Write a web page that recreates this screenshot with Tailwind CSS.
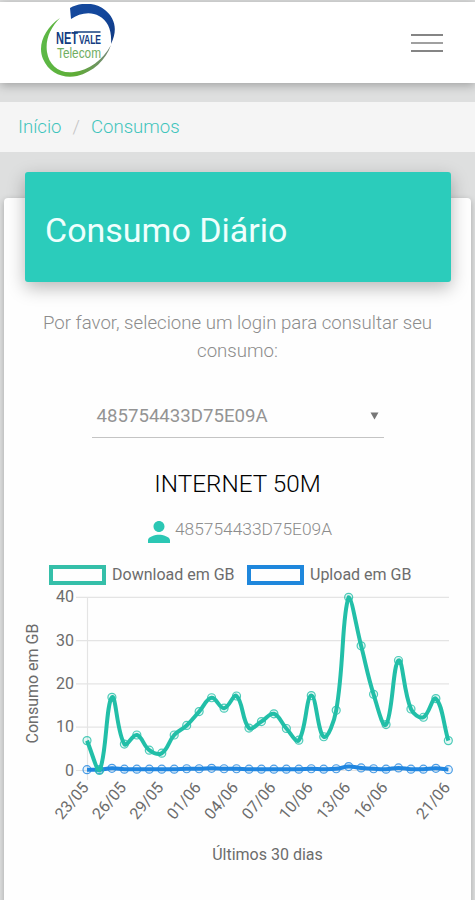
<!DOCTYPE html>
<html lang="pt-BR">

<head>
    <meta charset="utf-8">
    <meta name="viewport" content="width=device-width, initial-scale=1">
    <script src="https://cdn.jsdelivr.net/npm/@tailwindcss/browser@4"></script>
    <title>Consumos</title>
</head>

<body class="h-[900px] overflow-hidden bg-[#dedfdf] pt-[2px] font-['Roboto',sans-serif] font-light">
    <header class="relative flex h-[81px] items-center justify-between bg-white pr-8 pl-10 shadow-[0_2px_10px_rgba(0,0,0,0.3)]">
        <a href="#" aria-label="NetVale Telecom">
            <svg width="78" height="78" viewBox="40 3 78 78">
                <defs>
                    <linearGradient id="blue" x1="0" y1="0" x2="1" y2="1">
                        <stop offset="0" stop-color="#174a9c" />
                        <stop offset="0.5" stop-color="#12469c" />
                        <stop offset="1" stop-color="#123a80" />
                    </linearGradient>
                    <linearGradient id="green" x1="0" y1="0" x2="1" y2="0">
                        <stop offset="0" stop-color="#5cb947" />
                        <stop offset="0.5" stop-color="#5fac35" />
                        <stop offset="1" stop-color="#77867a" />
                    </linearGradient>
                </defs>
                <path d="M70 7C80 1 96 1 105 9C115 17 118 29 111 43C112 29 108 20 99 15C91 10 79 12 71 18Z" fill="url(#blue)" />
                <path d="M60 17C45 27 37 44 43 58C49 72 63 78 77 75C93 71 106 59 111 44C102 60 89 69 74 71C59 73 49 64 47 51C45 38 51 26 60 17Z" fill="url(#green)" />
                <path d="M74 31H100.500" stroke="#16407f" stroke-width="1.500" />
                <text x="56" y="43" textLength="22" lengthAdjust="spacingAndGlyphs" class="fill-[#123c82] font-['Liberation_Sans',sans-serif] text-[17px] font-bold">NET</text>
                <text x="79" y="43" textLength="22" lengthAdjust="spacingAndGlyphs" class="fill-[#123c82] font-['Liberation_Sans',sans-serif] text-[12px] font-bold">VALE</text>
                <text x="57" y="56.500" textLength="44" lengthAdjust="spacingAndGlyphs" class="fill-[#6fae62] font-['Liberation_Sans',sans-serif] text-[14px] font-normal">Telecom</text>
            </svg>
        </a>
        <button class="flex flex-col gap-[6px]" aria-label="Menu">
            <span class="h-[2px] w-8 bg-[#858585]"></span>
            <span class="h-[2px] w-8 bg-[#a0a0a0]"></span>
            <span class="h-[2px] w-8 bg-[#858585]"></span>
        </button>
    </header>

    <nav class="mt-[19px] flex h-[50px] items-center bg-[#f5f5f5] pt-px pl-[18px] text-[18.600px]">
        <a href="#" class="text-[#3fc4bc]">Início</a>
        <span class="mr-[11px] ml-[11px] text-[#c4c4c4]">/</span>
        <a href="#" class="text-[#3fc4bc]">Consumos</a>
    </nav>

    <main class="mx-1 mt-[46px] h-[720px] rounded-[4px] bg-[#fefefe] px-[21px] shadow-[0_2px_6px_rgba(0,0,0,0.25)]">
        <div class="relative -top-[26px] -mb-[26px] flex h-[110px] w-[426px] items-center rounded-[3px] bg-[#2bccbb] pt-[6px] pl-5 shadow-[0_6px_18px_rgba(0,0,0,0.28)]">
            <h1 class="text-[34px] font-normal text-[#effffd]">Consumo Diário</h1>
        </div>

        <p class="mt-[27px] text-center text-[18.650px] leading-7 text-[#8c8c8c]">Por favor, selecione um login para consultar seu<br>consumo:</p>

        <div class="mx-auto mt-[29px] flex h-[44px] w-[292px] items-center justify-between border-b border-[#c4c4c4] px-[5px] pt-[2px] text-[18.650px] font-normal text-[#949494]">
            <span>485754433D75E09A</span>
            <svg width="9" height="8" viewBox="0 0 10 9" fill="#777" class="mb-[2px]"><path d="M0.500 0.500H9.500L5 8.500Z" /></svg>
        </div>

        <h2 class="mt-[30px] text-center text-[24.300px] leading-8 text-black">INTERNET 50M</h2>

        <div class="mt-[13px] flex h-8 items-center justify-center gap-[5px] pl-[5px] text-[17.350px] text-[#8c8c8c]">
            <svg width="22" height="22" viewBox="4 4 16 16" fill="#2bc7b4" class="mt-[6px]"><path d="M12 12c2.210 0 4-1.790 4-4s-1.790-4-4-4-4 1.790-4 4 1.790 4 4 4zm0 2c-2.670 0-8 1.340-8 4v2h16v-2c0-2.660-5.330-4-8-4z" /></svg>
            <span>485754433D75E09A</span>
        </div>

        <div class="mt-[20px] flex h-5 items-center pl-6 text-[16px] font-normal text-[#6c6c6c]">
            <span class="h-5 w-[57px] border-4 border-[#35bfa9]"></span>
            <span class="ml-[6px] w-[135px]">Download em GB</span>
            <span class="h-5 w-[57px] border-4 border-[#1f87dc]"></span>
            <span class="ml-[6px]">Upload em GB</span>
        </div>

        <svg id="chart" width="440" height="290" viewBox="15 585 440 290" class="-ml-[10px] max-w-none font-['Roboto',sans-serif] text-[16px] font-normal">
            <g id="grid" stroke="#e4e4e4" stroke-width="1.200"></g>
            <g id="ticks" fill="#6c6c6c"></g>
            <g id="lines" fill="none"></g>
            <text transform="translate(37.500 683.500) rotate(-90)" text-anchor="middle" fill="#6c6c6c">Consumo em GB</text>
            <text x="267.500" y="860" text-anchor="middle" fill="#6c6c6c">Últimos 30 dias</text>
        </svg>
    </main>
</body>
<script>
    const download = [6.9, 0, 16.9, 6.1, 8.2, 4.7, 4, 8.2, 10.4, 13.6, 16.8, 14.4, 17.2, 9.8, 11.3, 13.1, 9.7, 7, 17.3, 7.8, 13.9, 40, 28.8, 17.6, 10.6, 25.4, 14.2, 12.3, 16.6, 6.9];
    const upload = [0.2, 0.2, 0.5, 0.3, 0.3, 0.3, 0.3, 0.3, 0.4, 0.4, 0.5, 0.4, 0.4, 0.3, 0.3, 0.3, 0.3, 0.3, 0.4, 0.3, 0.4, 0.9, 0.6, 0.4, 0.3, 0.6, 0.3, 0.3, 0.5, 0.2];
    const labels = { 0: "23/05", 3: "26/05", 6: "29/05", 9: "01/06", 12: "04/06", 15: "07/06", 18: "10/06", 21: "13/06", 24: "16/06", 29: "21/06" };

    const getX = (i) => 87 + i * 12.46;
    const getY = (value) => 770.5 - value * 4.33;
    const clamp = (y) => Math.max(597, Math.min(770.5, y));

    // smooth curve, control points are kept inside the chart area
    const curve = (values) => {
        const pts = values.map((v, i) => [getX(i), getY(v)]);
        const controls = pts.map((p, i) => {
            const prev = pts[i - 1] || p;
            const next = pts[i + 1] || p;
            const d1 = Math.hypot(p[0] - prev[0], p[1] - prev[1]);
            const d2 = Math.hypot(next[0] - p[0], next[1] - p[1]);
            const a = 0.4 * d1 / (d1 + d2);
            const b = 0.4 * d2 / (d1 + d2);
            const dx = next[0] - prev[0];
            const dy = next[1] - prev[1];
            return [p[0] - a * dx, clamp(p[1] - a * dy), p[0] + b * dx, clamp(p[1] + b * dy)];
        });
        let d = `M${pts[0]}`;
        for (let i = 1; i < pts.length; i++) {
            d += `C${controls[i - 1][2]},${controls[i - 1][3]} ${controls[i][0]},${controls[i][1]} ${pts[i]}`;
        }
        return d;
    }

    const drawLine = (values, color) => {
        const dots = values.map((v, i) => `<circle cx="${getX(i)}" cy="${getY(v)}" r="4" fill="${color}" fill-opacity="0.1" stroke="${color}" stroke-width="1.2" stroke-opacity="0.8"/>`).join("");
        document.getElementById("lines").innerHTML += `<path d="${curve(values)}" stroke="${color}" stroke-width="4"/>${dots}`;
    }

    let grid = `<path d="M87.5 597V780"/>`;
    let ticks = "";
    [0, 10, 20, 30, 40].forEach((value) => {
        const y = getY(value);
        grid += `<path d="M76 ${y}H449"/>`;
        ticks += `<text x="74" y="${y + 5}" text-anchor="end">${value}</text>`;
    })
    for (const i in labels) {
        ticks += `<text transform="translate(${getX(Number(i)) - 2} 784) rotate(-50)" text-anchor="end" dy="6">${labels[i]}</text>`;
    }
    document.getElementById("grid").innerHTML = grid;
    document.getElementById("ticks").innerHTML = ticks;

    drawLine(upload, "#2186e0");
    drawLine(download, "#22bfa8");
</script>

</html>
